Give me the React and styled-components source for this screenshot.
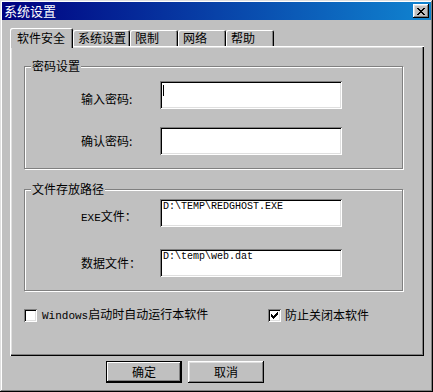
import React from "react";
import styled, { createGlobalStyle } from "styled-components";

const GlobalStyle = createGlobalStyle`
  body {
    margin: 0;
    background: #c0c0c0;
    font-family: "Noto Sans CJK SC", "Liberation Sans", sans-serif;
    font-size: 12px;
    color: #000;
  }
`;

const Window = styled.div`
  width: 433px;
  height: 392px;
  box-sizing: border-box;
  padding: 2px;
  background: #c0c0c0;
  box-shadow: inset -1px -1px #000, inset 1px 1px #dfdfdf, inset -2px -2px #808080, inset 2px 2px #fff;
  display: flex;
  flex-direction: column;
`;

const TitleBar = styled.div`
  height: 18px;
  padding: 0 2px;
  display: flex;
  align-items: center;
  justify-content: space-between;
  background: linear-gradient(90deg, #000080, #1084d0);
  color: #fff;
  font-size: 13px;
  line-height: 14px;
`;

const CloseButton = styled.div`
  width: 16px;
  height: 14px;
  box-sizing: border-box;
  background: #c0c0c0;
  box-shadow: inset -1px -1px #000, inset 1px 1px #fff, inset -2px -2px #808080, inset 2px 2px #dfdfdf;
  display: flex;
  align-items: center;
  justify-content: center;
`;

const Body = styled.div`
  padding: 8px 0 0 8px;
  display: flex;
  flex-direction: column;
`;

const TabStrip = styled.div`
  display: flex;
  align-items: flex-end;
  height: 18px;
`;

const Tab = styled.div`
  position: relative;
  z-index: ${(p) => (p.$active ? 1 : 0)};
  box-sizing: border-box;
  width: ${(p) => p.$w}px;
  height: ${(p) => (p.$active ? 20 : 16)}px;
  margin-bottom: ${(p) => (p.$active ? -2 : 0)}px;
  padding: ${(p) => (p.$active ? "3px 0 0 7px" : "1px 0 0 5px")};
  background: #c0c0c0;
  border-radius: 2px 2px 0 0;
  box-shadow: inset 1px 1px #fff, inset -1px 0 #000, inset -2px 0 #808080;
  line-height: 14px;
  white-space: nowrap;
`;

const Panel = styled.div`
  width: 414px;
  height: 310px;
  box-sizing: border-box;
  padding: 20px 0 0 14px;
  background: #c0c0c0;
  box-shadow: inset 1px 1px #fff, inset -1px -1px #000, inset -2px -2px #808080, inset 2px 2px #dfdfdf;
  display: flex;
  flex-direction: column;
`;

const Group = styled.div`
  position: relative;
  width: 379px;
  box-sizing: border-box;
  margin-bottom: ${(p) => p.$mb}px;
  padding: ${(p) => p.$pt}px 0 13px 56px;
  border: 1px solid #808080;
  box-shadow: inset 1px 1px #fff, 1px 1px #fff;
  display: flex;
  flex-direction: column;
  gap: ${(p) => p.$gap}px;
`;

const Legend = styled.span`
  position: absolute;
  top: -8px;
  left: 6px;
  padding: 0 1px;
  background: #c0c0c0;
  line-height: 14px;
`;

const Row = styled.div`
  display: flex;
  align-items: center;
`;

const Label = styled.div`
  width: 79px;
  line-height: 14px;
  position: relative;
  top: ${(p) => p.$dy || 0}px;
  white-space: nowrap;
`;

const Mono = styled.span`
  font-family: "Liberation Mono", monospace;
  font-size: 11px;
`;

const Field = styled.div`
  width: 182px;
  height: 28px;
  box-sizing: border-box;
  padding: 2px 3px;
  background: #fff;
  box-shadow: inset 1px 1px #808080, inset -1px -1px #fff, inset 2px 2px #000, inset -2px -2px #dfdfdf;
  font-family: "Liberation Mono", monospace;
  font-size: 10px;
  line-height: 12px;
  white-space: nowrap;
`;

const Caret = styled.div`
  width: 1px;
  height: 11px;
  margin-top: 2px;
  background: #000;
`;

const Options = styled.div`
  margin-top: 16px;
  display: grid;
  grid-template-columns: 244px 1fr;
`;

const Option = styled.div`
  display: flex;
  align-items: center;
  gap: ${(p) => p.$gap}px;
  line-height: 14px;
  white-space: nowrap;
`;

const Box = styled.div`
  width: 13px;
  height: 13px;
  box-sizing: border-box;
  background: #fff;
  box-shadow: inset 1px 1px #808080, inset -1px -1px #fff, inset 2px 2px #000, inset -2px -2px #dfdfdf;
  display: flex;
  align-items: center;
  justify-content: center;
`;

const Buttons = styled.div`
  display: flex;
  gap: 6px;
  margin: 5px 0 0 96px;
`;

const Button = styled.div`
  width: 76px;
  height: 22px;
  box-sizing: border-box;
  display: flex;
  align-items: center;
  justify-content: center;
  background: #c0c0c0;
  line-height: 14px;
  border: ${(p) => (p.$default ? "1px solid #000" : "none")};
  box-shadow: ${(p) =>
    p.$default
      ? "inset -1px -1px #000, inset 1px 1px #fff, inset -2px -2px #808080"
      : "inset -1px -1px #000, inset 1px 1px #fff, inset -2px -2px #808080, inset 2px 2px #dfdfdf"};
`;

function CloseIcon() {
  return (
    <svg width="8" height="7" viewBox="0 0 8 7" shapeRendering="crispEdges">
      <path d="M0 0h2v1h1v1h2v-1h1v-1h2v1h-1v1h-1v1h-1v1h1v1h1v1h1v1h-2v-1h-1v-1h-2v1h-1v1h-2v-1h1v-1h1v-1h1v-1h-1v-1h-1v-1h-1z" fill="#000" />
    </svg>
  );
}

function CheckIcon() {
  return (
    <svg width="7" height="7" viewBox="0 0 7 7" shapeRendering="crispEdges">
      <path d="M6 0h1v3h-1v1h-1v1h-1v1h-1v1h-1v-1h-1v-1h-1v-3h1v1h1v1h1v-1h1v-1h1v-1h1z" fill="#000" />
    </svg>
  );
}

const tabs = [
  { name: "软件安全", w: 63, active: true },
  { name: "系统设置", w: 57 },
  { name: "限制", w: 48 },
  { name: "网络", w: 48 },
  { name: "帮助", w: 48 },
];

export default function App() {
  return (
    <>
      <GlobalStyle />
      <Window>
        <TitleBar>
          <span>系统设置</span>
          <CloseButton>
            <CloseIcon />
          </CloseButton>
        </TitleBar>
        <Body>
          <TabStrip>
            {tabs.map((t) => (
              <Tab key={t.name} $w={t.w} $active={t.active}>
                {t.name}
              </Tab>
            ))}
          </TabStrip>
          <Panel>
            <Group $pt={14} $gap={18} $mb={20}>
              <Legend>密码设置</Legend>
              <Row>
                <Label $dy={4}>输入密码:</Label>
                <Field>
                  <Caret />
                </Field>
              </Row>
              <Row>
                <Label>确认密码:</Label>
                <Field />
              </Row>
            </Group>
            <Group $pt={9} $gap={22} $mb={0}>
              <Legend>文件存放路径</Legend>
              <Row>
                <Label $dy={4}>
                  <Mono>EXE</Mono>文件：
                </Label>
                <Field>D:\TEMP\REDGHOST.EXE</Field>
              </Row>
              <Row>
                <Label>数据文件：</Label>
                <Field>D:\temp\web.dat</Field>
              </Row>
            </Group>
            <Options>
              <Option $gap={5}>
                <Box />
                <span>
                  <Mono>Windows</Mono>启动时自动运行本软件
                </span>
              </Option>
              <Option $gap={4}>
                <Box>
                  <CheckIcon />
                </Box>
                <span>防止关闭本软件</span>
              </Option>
            </Options>
          </Panel>
          <Buttons>
            <Button $default>确定</Button>
            <Button>取消</Button>
          </Buttons>
        </Body>
      </Window>
    </>
  );
}
